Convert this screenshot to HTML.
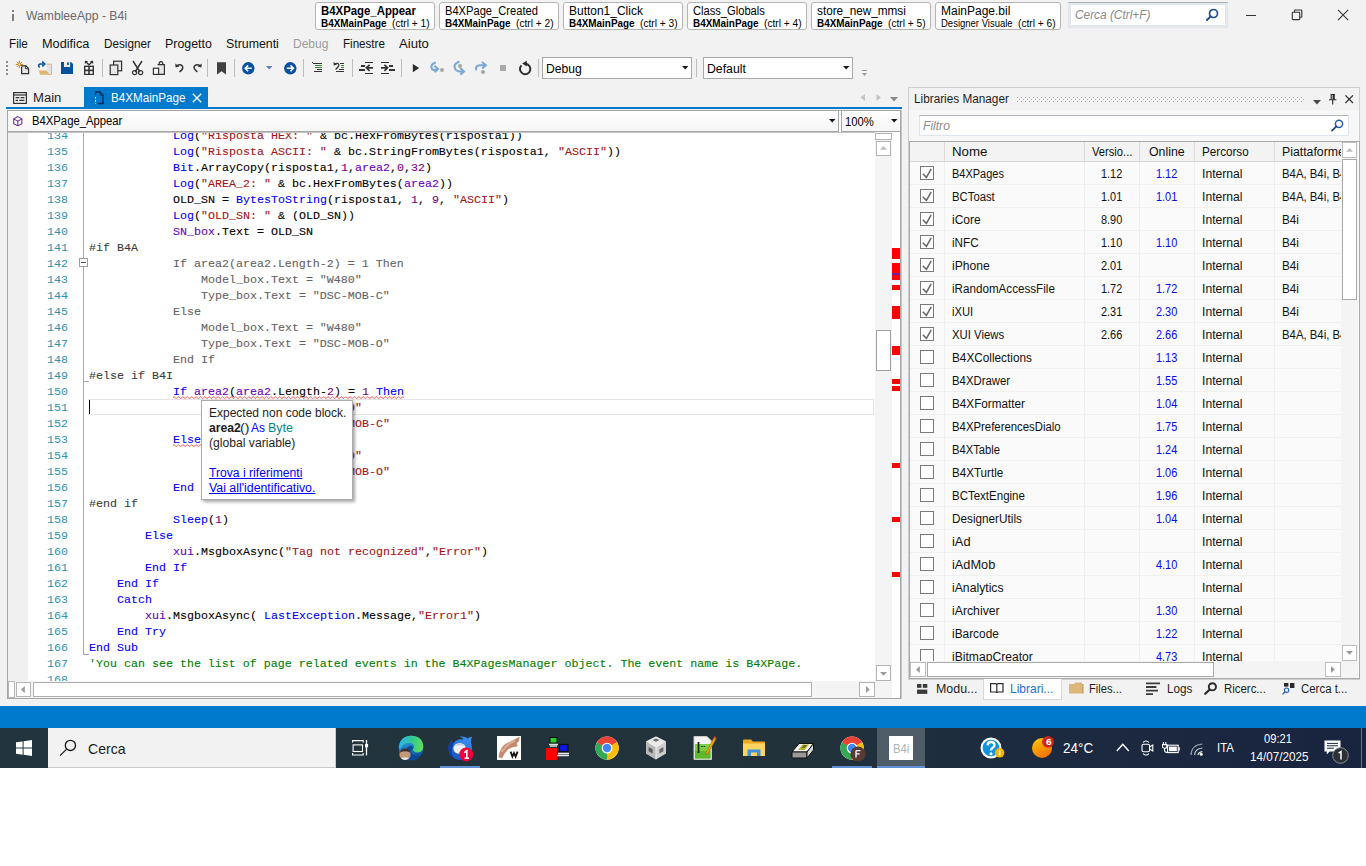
<!DOCTYPE html>
<html lang="it"><head><meta charset="utf-8"><title>B4i</title>
<style>
html,body{margin:0;padding:0;}
body{width:1366px;height:866px;position:relative;overflow:hidden;background:#fff;font-family:"Liberation Sans", sans-serif;font-size:12px;}
div,span.t,svg{position:absolute;}
span.t{white-space:pre;transform-origin:0 0;}
span.m{font-family:"Liberation Mono", monospace;}
span.c{font-size:11.67px;line-height:16px;letter-spacing:-0.003px;}
span.k{-webkit-text-stroke:0.1px;}
</style></head>
<body>
<div style="left:0px;top:0px;width:1366px;height:706px;background:#f2f2f2;"></div>
<div style="left:12px;top:10px;width:2px;height:2px;background:#7f7f7f;"></div>
<div style="left:12px;top:14px;width:2px;height:7px;background:#7f7f7f;"></div>
<span class="t" style="top:9.00px;font-size:12.5px;line-height:14px;color:#6a6a6a;left:25.82px;transform:scaleX(0.9723);">WambleeApp - B4i</span>
<div style="left:315px;top:2px;width:120px;height:28px;background:#fff;border:1px solid #b4b4b4;box-sizing:border-box;border-radius:3px;"></div>
<span class="t" style="top:4.00px;font-size:12.5px;line-height:14px;color:#000;font-weight:700;left:321.33px;transform:scaleX(0.9103);">B4XPage_Appear</span>
<span class="t" style="top:18.00px;font-size:10px;line-height:11px;color:#000;font-weight:700;left:321.35px;transform:scaleX(0.9918);">B4XMainPage</span>
<span class="t" style="top:18.00px;font-size:10px;line-height:11px;color:#000;left:392.15px;transform:scaleX(1.0175);">(ctrl + 1)</span>
<div style="left:439px;top:2px;width:120px;height:28px;background:#fff;border:1px solid #b4b4b4;box-sizing:border-box;border-radius:3px;"></div>
<span class="t" style="top:4.00px;font-size:12.5px;line-height:14px;color:#000;left:445.33px;transform:scaleX(0.8909);">B4XPage_Created</span>
<span class="t" style="top:18.00px;font-size:10px;line-height:11px;color:#000;font-weight:700;left:445.35px;transform:scaleX(0.9918);">B4XMainPage</span>
<span class="t" style="top:18.00px;font-size:10px;line-height:11px;color:#000;left:516.15px;transform:scaleX(1.0175);">(ctrl + 2)</span>
<div style="left:563px;top:2px;width:120px;height:28px;background:#fff;border:1px solid #b4b4b4;box-sizing:border-box;border-radius:3px;"></div>
<span class="t" style="top:4.00px;font-size:12.5px;line-height:14px;color:#000;left:569.32px;transform:scaleX(0.9579);">Button1_Click</span>
<span class="t" style="top:18.00px;font-size:10px;line-height:11px;color:#000;font-weight:700;left:569.35px;transform:scaleX(0.9918);">B4XMainPage</span>
<span class="t" style="top:18.00px;font-size:10px;line-height:11px;color:#000;left:640.15px;transform:scaleX(1.0175);">(ctrl + 3)</span>
<div style="left:687px;top:2px;width:120px;height:28px;background:#fff;border:1px solid #b4b4b4;box-sizing:border-box;border-radius:3px;"></div>
<span class="t" style="top:4.00px;font-size:12.5px;line-height:14px;color:#000;left:693.33px;transform:scaleX(0.8918);">Class_Globals</span>
<span class="t" style="top:18.00px;font-size:10px;line-height:11px;color:#000;font-weight:700;left:693.35px;transform:scaleX(0.9918);">B4XMainPage</span>
<span class="t" style="top:18.00px;font-size:10px;line-height:11px;color:#000;left:764.15px;transform:scaleX(1.0175);">(ctrl + 4)</span>
<div style="left:811px;top:2px;width:120px;height:28px;background:#fff;border:1px solid #b4b4b4;box-sizing:border-box;border-radius:3px;"></div>
<span class="t" style="top:4.00px;font-size:12.5px;line-height:14px;color:#000;left:817.32px;transform:scaleX(0.9406);">store_new_mmsi</span>
<span class="t" style="top:18.00px;font-size:10px;line-height:11px;color:#000;font-weight:700;left:817.35px;transform:scaleX(0.9918);">B4XMainPage</span>
<span class="t" style="top:18.00px;font-size:10px;line-height:11px;color:#000;left:888.15px;transform:scaleX(1.0175);">(ctrl + 5)</span>
<div style="left:935px;top:2px;width:126px;height:28px;background:#fff;border:1px solid #b4b4b4;box-sizing:border-box;border-radius:3px;"></div>
<span class="t" style="top:4.00px;font-size:12.5px;line-height:14px;color:#000;left:941.32px;transform:scaleX(0.9600);">MainPage.bil</span>
<span class="t" style="top:18.00px;font-size:10px;line-height:11px;color:#000;left:941.36px;transform:scaleX(0.9493);">Designer Visuale</span>
<span class="t" style="top:18.00px;font-size:10px;line-height:11px;color:#000;left:1018.15px;transform:scaleX(1.0175);">(ctrl + 6)</span>
<div style="left:1068px;top:2px;width:160px;height:26px;background:#fff;border:3px solid #e2e6ed;box-sizing:border-box;"></div>
<div style="left:1068px;top:2px;width:160px;height:1px;background:#adb0b6;"></div>
<span class="t" style="top:8.00px;font-size:12.5px;line-height:14px;color:#8a8a8a;font-style:italic;left:1074.82px;transform:scaleX(0.9477);">Cerca (Ctrl+F)</span>
<svg style="left:1204px;top:7px" width="16" height="16" viewBox="0 0 16 16"><circle cx="9.5" cy="6.5" r="4" fill="none" stroke="#1f4e9c" stroke-width="1.7"/><path d="M6.6 9.4 L3 13" stroke="#1f4e9c" stroke-width="2" stroke-linecap="round"/></svg>
<div style="left:1246px;top:15px;width:10px;height:1px;background:#333;"></div>
<svg style="left:1291px;top:9px" width="12" height="12" viewBox="0 0 12 12"><path d="M3.5 3 V1.4 Q3.5 1 4 1 H10.3 Q10.8 1 10.8 1.5 V7.8 Q10.8 8.3 10.3 8.3 H9" fill="none" stroke="#333" stroke-width="1.1"/><rect x="1.3" y="3.3" width="7.4" height="7.3" rx="0.6" fill="none" stroke="#333" stroke-width="1.1"/></svg>
<svg style="left:1337px;top:9px" width="12" height="12" viewBox="0 0 12 12"><path d="M1 0.9 L11.2 11.1 M11.2 0.9 L1 11.1" stroke="#333" stroke-width="1.1"/></svg>
<span class="t" style="top:37.00px;font-size:12.5px;line-height:14px;color:#111;left:9.32px;transform:scaleX(0.9364);">File</span>
<span class="t" style="top:37.00px;font-size:12.5px;line-height:14px;color:#111;left:42.31px;transform:scaleX(1.0178);">Modifica</span>
<span class="t" style="top:37.00px;font-size:12.5px;line-height:14px;color:#111;left:104.32px;transform:scaleX(0.9369);">Designer</span>
<span class="t" style="top:37.00px;font-size:12.5px;line-height:14px;color:#111;left:165.31px;transform:scaleX(0.9917);">Progetto</span>
<span class="t" style="top:37.00px;font-size:12.5px;line-height:14px;color:#111;left:226.31px;transform:scaleX(0.9883);">Strumenti</span>
<span class="t" style="top:37.00px;font-size:12.5px;line-height:14px;color:#9a9a9a;left:293.32px;transform:scaleX(0.9601);">Debug</span>
<span class="t" style="top:37.00px;font-size:12.5px;line-height:14px;color:#111;left:343.33px;transform:scaleX(0.9273);">Finestre</span>
<span class="t" style="top:37.00px;font-size:12.5px;line-height:14px;color:#111;left:399.30px;transform:scaleX(1.0482);">Aiuto</span>
<div style="left:6px;top:61px;width:2px;height:2px;background:#8c8c8c;"></div>
<div style="left:6px;top:65px;width:2px;height:2px;background:#8c8c8c;"></div>
<div style="left:6px;top:69px;width:2px;height:2px;background:#8c8c8c;"></div>
<div style="left:6px;top:73px;width:2px;height:2px;background:#8c8c8c;"></div>
<svg style="left:15px;top:60px" width="16" height="16" viewBox="0 0 16 16"><path d="M6.6 5.8 H11 L13.6 8.4 V13.6 H6.6 Z" fill="#e8e8e8" stroke="#333333" stroke-width="1.2"/><path d="M10.6 5.8 V8.8 H13.6" fill="none" stroke="#333333" stroke-width="1"/><path d="M4.4 0.8 V8 M0.8 4.4 H8 M1.9 1.9 L6.9 6.9 M6.9 1.9 L1.9 6.9" stroke="#d47800" stroke-width="1"/><circle cx="4.4" cy="4.4" r="1" fill="#fff"/></svg>
<svg style="left:37px;top:60px" width="16" height="16" viewBox="0 0 16 16"><path d="M9.5 4.2 H14.5 V14.4 H11" fill="#e4e4e4" stroke="#dcb77c" stroke-width="1"/><path d="M2 10.4 H9.6 L12.6 14.8 H3 Z" fill="#deb673"/><path d="M2.6 7.6 Q0.4 5 3.2 4 H6.4" fill="none" stroke="#0a4fa3" stroke-width="1.6"/><path d="M5.2 1.6 L7.8 4 L5.2 6.4" fill="none" stroke="#0a4fa3" stroke-width="1.6"/></svg>
<svg style="left:61px;top:62px" width="12" height="12" viewBox="0 0 12 12"><path d="M0 0 H10 L12 2 V12 H0 Z" fill="#00539c"/><rect x="3" y="0" width="6.2" height="5" fill="#f0ece8"/><rect x="6.1" y="0.4" width="1.7" height="2.6" fill="#00539c"/></svg>
<svg style="left:83px;top:60px" width="12" height="16" viewBox="0 0 12 16"><rect x="1" y="5.6" width="10" height="9.4" fill="#333333"/><rect x="2.4" y="7" width="2.8" height="2.6" fill="#f4f4f4"/><rect x="6.8" y="7" width="2.8" height="2.6" fill="#f4f4f4"/><rect x="2.4" y="11.2" width="2.8" height="2.6" fill="#f4f4f4"/><rect x="6.8" y="11.2" width="2.8" height="2.6" fill="#f4f4f4"/><path d="M2.6 1.6 L6 4.8 L9.4 1.6 M2.2 3.4 L2.6 1.4 L4.6 1.6 M9.8 3.4 L9.4 1.4 L7.4 1.6" fill="none" stroke="#333333" stroke-width="1.3"/></svg>
<div style="left:102px;top:59px;width:1px;height:18px;background:#bdbdbd;"></div>
<svg style="left:109px;top:60px" width="14" height="16" viewBox="0 0 14 16"><rect x="4.6" y="1.2" width="8" height="9.6" fill="#e6e6e6" stroke="#333333" stroke-width="1.2"/><rect x="1.2" y="5" width="7.6" height="9.6" fill="#e6e6e6" stroke="#333333" stroke-width="1.2"/></svg>
<svg style="left:131px;top:60px" width="14" height="16" viewBox="0 0 14 16"><path d="M2 1 L9 12 M11 1 L4 12" stroke="#333333" stroke-width="1.4"/><circle cx="3.6" cy="12.6" r="2.1" fill="none" stroke="#333333" stroke-width="1.2"/><circle cx="9.6" cy="12.6" r="2.1" fill="none" stroke="#333333" stroke-width="1.2"/></svg>
<svg style="left:152px;top:60px" width="14" height="16" viewBox="0 0 14 16"><path d="M5.6 4.6 H12.4 V14.4 H7" fill="#e6e6e6" stroke="#333333" stroke-width="1.2"/><path d="M7 4.4 Q7.2 1.6 9 1.6 Q10.8 1.6 11 4.4" fill="none" stroke="#333333" stroke-width="1.2"/><rect x="1.4" y="8.2" width="5.2" height="6.2" fill="#f6f6f6" stroke="#333333" stroke-width="1.2"/></svg>
<svg style="left:174px;top:63px" width="11" height="10" viewBox="0 0 11 10"><path d="M2.6 2.8 Q7.2 0.2 8.6 3.6 Q9.4 6.4 5.4 8.8" fill="none" stroke="#333333" stroke-width="1.5"/><path d="M1.2 0.6 L1.6 4.6 L5.4 3.6 Z" fill="#333333"/></svg>
<svg style="left:192px;top:63px" width="11" height="10" viewBox="0 0 11 10"><path d="M8.6 2.8 Q4 0.2 2.2 3.4 Q1.4 5.6 5.4 8.8" fill="none" stroke="#333333" stroke-width="1.5"/><path d="M9.8 0.6 L9.4 4.6 L5.6 3.6 Z" fill="#333333"/></svg>
<div style="left:207px;top:59px;width:1px;height:18px;background:#bdbdbd;"></div>
<svg style="left:216px;top:62px" width="12" height="13" viewBox="0 0 12 13"><path d="M1 0.3 H10 V12.4 L5.5 9.2 L1 12.4 Z" fill="#404040"/></svg>
<div style="left:234px;top:59px;width:1px;height:18px;background:#bdbdbd;"></div>
<svg style="left:241.5px;top:61.5px" width="13" height="13" viewBox="0 0 13 13"><circle cx="6.3" cy="6.3" r="6.2" fill="#0a4fa3"/><path d="M9.8 6.3 H3.4 M6.1 3.4 L3.2 6.3 L6.1 9.2" fill="none" stroke="#fff" stroke-width="1.6"/></svg>
<svg style="left:266px;top:66px" width="7" height="4" viewBox="0 0 7 4"><path d="M0 0 H6.4 L3.2 3.6 Z" fill="#5a7fc4"/></svg>
<svg style="left:283.5px;top:61.5px" width="13" height="13" viewBox="0 0 13 13"><circle cx="6.3" cy="6.3" r="6.2" fill="#0a4fa3"/><path d="M2.8 6.3 H9.2 M6.5 3.4 L9.4 6.3 L6.5 9.2" fill="none" stroke="#fff" stroke-width="1.6"/></svg>
<div style="left:303px;top:59px;width:1px;height:18px;background:#bdbdbd;"></div>
<div style="left:312px;top:62px;width:1px;height:1px;background:#333333;"></div>
<div style="left:313px;top:63px;width:9px;height:1px;background:#333333;"></div>
<div style="left:315px;top:65px;width:7px;height:1px;background:#2e8b2e;"></div>
<div style="left:315px;top:67px;width:7px;height:1px;background:#2e8b2e;"></div>
<div style="left:317px;top:69px;width:5px;height:1px;background:#333333;"></div>
<div style="left:314px;top:71px;width:8px;height:1px;background:#333333;"></div>
<svg style="left:333px;top:61px" width="8" height="10" viewBox="0 0 8 10"><path d="M1.4 3.6 Q5.2 1 5.8 3.8 Q6 5.6 2.6 8.4" fill="none" stroke="#333333" stroke-width="1.3"/><path d="M0.4 1 L0.8 4.6 L4 3.6 Z" fill="#333333"/></svg>
<div style="left:340px;top:63px;width:4px;height:1px;background:#333333;"></div>
<div style="left:341px;top:65px;width:3px;height:1px;background:#2e8b2e;"></div>
<div style="left:341px;top:67px;width:3px;height:1px;background:#2e8b2e;"></div>
<div style="left:339px;top:69px;width:5px;height:1px;background:#333333;"></div>
<div style="left:336px;top:71px;width:8px;height:1px;background:#333333;"></div>
<div style="left:352px;top:59px;width:1px;height:18px;background:#bdbdbd;"></div>
<div style="left:365px;top:62px;width:8px;height:1px;background:#333333;"></div>
<div style="left:365px;top:73px;width:8px;height:1px;background:#333333;"></div>
<div style="left:361px;top:65px;width:4px;height:2px;background:#333333;"></div>
<div style="left:359px;top:69px;width:6px;height:2px;background:#333333;"></div>
<svg style="left:365px;top:64px" width="9" height="8" viewBox="0 0 9 8"><path d="M8 3.8 H2 M4.6 0.8 L1.4 3.8 L4.6 6.8" fill="none" stroke="#333333" stroke-width="1.7"/></svg>
<div style="left:381px;top:62px;width:8px;height:1px;background:#333333;"></div>
<div style="left:381px;top:73px;width:8px;height:1px;background:#333333;"></div>
<div style="left:389px;top:65px;width:4px;height:2px;background:#333333;"></div>
<div style="left:389px;top:69px;width:6px;height:2px;background:#333333;"></div>
<svg style="left:380px;top:64px" width="9" height="8" viewBox="0 0 9 8"><path d="M1 3.8 H7 M4.4 0.8 L7.6 3.8 L4.4 6.8" fill="none" stroke="#333333" stroke-width="1.7"/></svg>
<div style="left:401px;top:59px;width:1px;height:18px;background:#bdbdbd;"></div>
<svg style="left:412px;top:64px" width="8" height="9" viewBox="0 0 8 9"><path d="M0.8 0 L7.2 4.1 L0.8 8.2 Z" fill="#2b2b2b"/></svg>
<svg style="left:429px;top:61px" width="16" height="14" viewBox="0 0 16 14"><path d="M6.8 1.6 Q0.6 3.4 3 8 Q4.4 9.6 8.4 8.2" fill="none" stroke="#7ba9d6" stroke-width="2.1"/><path d="M5.4 4.8 L9 8 L5.6 11.2" fill="none" stroke="#7ba9d6" stroke-width="2.1"/><circle cx="13" cy="9" r="2" fill="#a6a6a6"/></svg>
<svg style="left:453px;top:60px" width="13" height="16" viewBox="0 0 13 16"><path d="M6.4 1.4 Q-0.6 4 2.6 9.6 Q5 12.4 10 11.4" fill="none" stroke="#7ba9d6" stroke-width="2.1"/><path d="M7.2 8 L11 11.4 L7.4 14.8" fill="none" stroke="#7ba9d6" stroke-width="2.1"/><circle cx="7" cy="6" r="2" fill="#a6a6a6"/></svg>
<svg style="left:474px;top:61px" width="14" height="14" viewBox="0 0 14 14"><path d="M2.4 9.4 Q0.8 4.6 6 4.2 H11" fill="none" stroke="#7ba9d6" stroke-width="2.1"/><path d="M8 1 L11.8 4.2 L8.2 7.6" fill="none" stroke="#7ba9d6" stroke-width="2.1"/><circle cx="9" cy="11" r="2" fill="#a6a6a6"/></svg>
<div style="left:500px;top:65px;width:6px;height:6px;background:#a9a9a9;"></div>
<svg style="left:518px;top:60px" width="14" height="16" viewBox="0 0 14 16"><path d="M3.4 5.4 A5.2 5.2 0 1 0 7.4 3.8" fill="none" stroke="#2b2b2b" stroke-width="2"/><path d="M8.8 0.8 V6.6 L4.2 3.6 Z" fill="#2b2b2b"/></svg>
<div style="left:538px;top:59px;width:1px;height:18px;background:#bdbdbd;"></div>
<div style="left:542px;top:57px;width:150px;height:22px;background:#fff;border:1px solid #a8a8a8;box-sizing:border-box;"></div>
<span class="t" style="top:62.30px;font-size:12.5px;line-height:14px;color:#000;left:546.32px;transform:scaleX(0.9737);">Debug</span>
<svg style="left:682px;top:66px" width="7" height="4" viewBox="0 0 7 4"><path d="M0 0 H6.4 L3.2 3.6 Z" fill="#1a1a1a"/></svg>
<div style="left:696px;top:59px;width:1px;height:18px;background:#bdbdbd;"></div>
<div style="left:703px;top:57px;width:150px;height:22px;background:#fff;border:1px solid #a8a8a8;box-sizing:border-box;"></div>
<span class="t" style="top:62.30px;font-size:12.5px;line-height:14px;color:#000;left:707.32px;transform:scaleX(0.9815);">Default</span>
<svg style="left:843px;top:66px" width="7" height="4" viewBox="0 0 7 4"><path d="M0 0 H6.4 L3.2 3.6 Z" fill="#1a1a1a"/></svg>
<svg style="left:862px;top:70px" width="6" height="7" viewBox="0 0 6 7"><path d="M0 0.5 H5" stroke="#9a9a9a" stroke-width="1"/><path d="M0 3 H5 L2.5 6 Z" fill="#9a9a9a"/></svg>
<svg style="left:13px;top:92px" width="14" height="13" viewBox="0 0 14 13"><rect x="0.6" y="0.6" width="12.8" height="10.8" fill="none" stroke="#333333" stroke-width="1.2"/><path d="M1 3 H13" stroke="#333333" stroke-width="1.2"/><path d="M2.6 5.6 H6.4 M7.6 5.6 H11.4 M2.6 8.4 H5 M6.2 8.4 H11.4" stroke="#333333" stroke-width="1.3"/></svg>
<span class="t" style="top:91.00px;font-size:12.5px;line-height:14px;color:#1e1e1e;left:32.80px;transform:scaleX(1.0473);">Main</span>
<div style="left:84px;top:87px;width:124px;height:21px;background:#007acc;"></div>
<svg style="left:92px;top:91px" width="12" height="14" viewBox="0 0 12 14"><path d="M3.5 4 V1 H8 L11 4 V12.5 H6" fill="none" stroke="#0c2a55" stroke-width="1.3"/><path d="M8 1 V4 H11" fill="none" stroke="#0c2a55" stroke-width="1"/><path d="M3.5 6 V12.5" stroke="#fff" stroke-width="1.1" stroke-dasharray="1.6 1.4"/><path d="M0 8.6 H2.6 M1.4 7.3 L0 8.6 L1.4 9.9" fill="none" stroke="#1d5fb5" stroke-width="1"/></svg>
<span class="t" style="top:91.00px;font-size:12.5px;line-height:14px;color:#fff;left:110.83px;transform:scaleX(0.9306);">B4XMainPage</span>
<svg style="left:192px;top:93px" width="10" height="10" viewBox="0 0 10 10"><path d="M0.8 0.8 L9.2 9.2 M9.2 0.8 L0.8 9.2" stroke="#fff" stroke-width="1.3"/></svg>
<div style="left:6px;top:107px;width:896px;height:2px;background:#007acc;"></div>
<svg style="left:860px;top:94px" width="6" height="8" viewBox="0 0 6 8"><path d="M5 0 V7 L0.5 3.5 Z" fill="#c4c4c4"/></svg>
<svg style="left:876px;top:94px" width="6" height="8" viewBox="0 0 6 8"><path d="M0.5 0 V7 L5 3.5 Z" fill="#c4c4c4"/></svg>
<svg style="left:890px;top:97px" width="9" height="5" viewBox="0 0 9 5"><path d="M0 0 H8 L4 4.5 Z" fill="#8a8a8a"/></svg>
<div style="left:7px;top:110px;width:894px;height:589px;background:#fff;border:1px solid #a6a6a6;box-sizing:border-box;"></div>
<div style="left:7px;top:110px;width:832px;height:22px;background:linear-gradient(#ffffff,#f6f6f6);border:1px solid #a6a6a6;box-sizing:border-box;"></div>
<div style="left:841px;top:110px;width:60px;height:22px;background:linear-gradient(#ffffff,#f6f6f6);border:1px solid #a6a6a6;box-sizing:border-box;"></div>
<svg style="left:13.4px;top:115.8px" width="9.6" height="10.5" viewBox="0 0 11 12"><path d="M5.5 0.7 L10.2 3.3 V8.7 L5.5 11.3 L0.8 8.7 V3.3 Z M0.8 3.3 L5.5 6 L10.2 3.3 M5.5 6 V11.3" fill="none" stroke="#6b2fa0" stroke-width="1.2"/></svg>
<span class="t" style="top:114.00px;font-size:12.5px;line-height:14px;color:#000;left:32.33px;transform:scaleX(0.9029);">B4XPage_Appear</span>
<svg style="left:829px;top:119px" width="7" height="4" viewBox="0 0 7 4"><path d="M0 0 H6.4 L3.2 3.4 Z" fill="#111"/></svg>
<span class="t" style="top:115.00px;font-size:12.5px;line-height:14px;color:#000;left:845.33px;transform:scaleX(0.9028);">100%</span>
<svg style="left:891px;top:119px" width="7" height="4" viewBox="0 0 7 4"><path d="M0 0 H6.4 L3.2 3.4 Z" fill="#111"/></svg>
<div style="left:8px;top:132px;width:867px;height:549px;overflow:hidden;background:#fff"><div style="left:0px;top:0px;width:20px;height:549px;background:#f0f0f0;"></div><div style="left:80px;top:267px;width:786px;height:16px;border:1px solid #e4e4e4;box-sizing:border-box;border-left:none;"></div><div style="left:81px;top:268px;width:1px;height:14px;background:#000;"></div><div style="left:75px;top:0px;width:1px;height:523px;background:#a9a9a9;"></div><div style="left:75px;top:522px;width:6px;height:1px;background:#a9a9a9;"></div><div style="left:75px;top:249px;width:6px;height:1px;background:#a9a9a9;"></div><div style="left:71px;top:126px;width:9px;height:9px;background:#fff;border:1px solid #a0a0a0;box-sizing:border-box;"></div><div style="left:73px;top:130px;width:5px;height:1px;background:#555;"></div><span class="t m c" style="left:39.00px;top:-4.00px;color:#2b91af">134</span><span class="t m c k" style="left:165.00px;top:-4.00px;color:#0000ff">Log</span><span class="t m c k" style="left:186.00px;top:-4.00px;color:#000000">(</span><span class="t m c k" style="left:193.00px;top:-4.00px;color:#a31515">"Risposta HEX: "</span><span class="t m c k" style="left:305.00px;top:-4.00px;color:#000000"> &amp; bc.HexFromBytes(risposta1))</span><span class="t m c" style="left:39.00px;top:12.00px;color:#2b91af">135</span><span class="t m c k" style="left:165.00px;top:12.00px;color:#0000ff">Log</span><span class="t m c k" style="left:186.00px;top:12.00px;color:#000000">(</span><span class="t m c k" style="left:193.00px;top:12.00px;color:#a31515">"Risposta ASCII: "</span><span class="t m c k" style="left:319.00px;top:12.00px;color:#000000"> &amp; bc.StringFromBytes(risposta1, </span><span class="t m c k" style="left:550.00px;top:12.00px;color:#a31515">"ASCII"</span><span class="t m c k" style="left:599.00px;top:12.00px;color:#000000">))</span><span class="t m c" style="left:39.00px;top:28.00px;color:#2b91af">136</span><span class="t m c k" style="left:165.00px;top:28.00px;color:#0000ff">Bit</span><span class="t m c k" style="left:186.00px;top:28.00px;color:#000000">.ArrayCopy(risposta1,</span><span class="t m c k" style="left:333.00px;top:28.00px;color:#800080">1</span><span class="t m c k" style="left:340.00px;top:28.00px;color:#000000">,</span><span class="t m c k" style="left:347.00px;top:28.00px;color:#6800c4">area2</span><span class="t m c k" style="left:382.00px;top:28.00px;color:#000000">,</span><span class="t m c k" style="left:389.00px;top:28.00px;color:#800080">0</span><span class="t m c k" style="left:396.00px;top:28.00px;color:#000000">,</span><span class="t m c k" style="left:403.00px;top:28.00px;color:#800080">32</span><span class="t m c k" style="left:417.00px;top:28.00px;color:#000000">)</span><span class="t m c" style="left:39.00px;top:44.00px;color:#2b91af">137</span><span class="t m c k" style="left:165.00px;top:44.00px;color:#0000ff">Log</span><span class="t m c k" style="left:186.00px;top:44.00px;color:#000000">(</span><span class="t m c k" style="left:193.00px;top:44.00px;color:#a31515">"AREA_2: "</span><span class="t m c k" style="left:263.00px;top:44.00px;color:#000000"> &amp; bc.HexFromBytes(</span><span class="t m c k" style="left:396.00px;top:44.00px;color:#6800c4">area2</span><span class="t m c k" style="left:431.00px;top:44.00px;color:#000000">))</span><span class="t m c" style="left:39.00px;top:60.00px;color:#2b91af">138</span><span class="t m c k" style="left:165.00px;top:60.00px;color:#000000">OLD_SN = </span><span class="t m c k" style="left:228.00px;top:60.00px;color:#0000ff">BytesToString</span><span class="t m c k" style="left:319.00px;top:60.00px;color:#000000">(risposta1, </span><span class="t m c k" style="left:403.00px;top:60.00px;color:#800080">1</span><span class="t m c k" style="left:410.00px;top:60.00px;color:#000000">, </span><span class="t m c k" style="left:424.00px;top:60.00px;color:#800080">9</span><span class="t m c k" style="left:431.00px;top:60.00px;color:#000000">, </span><span class="t m c k" style="left:445.00px;top:60.00px;color:#a31515">"ASCII"</span><span class="t m c k" style="left:494.00px;top:60.00px;color:#000000">)</span><span class="t m c" style="left:39.00px;top:76.00px;color:#2b91af">139</span><span class="t m c k" style="left:165.00px;top:76.00px;color:#0000ff">Log</span><span class="t m c k" style="left:186.00px;top:76.00px;color:#000000">(</span><span class="t m c k" style="left:193.00px;top:76.00px;color:#a31515">"OLD_SN: "</span><span class="t m c k" style="left:263.00px;top:76.00px;color:#000000"> &amp; (OLD_SN))</span><span class="t m c" style="left:39.00px;top:92.00px;color:#2b91af">140</span><span class="t m c k" style="left:165.00px;top:92.00px;color:#6800c4">SN_box</span><span class="t m c k" style="left:207.00px;top:92.00px;color:#000000">.Text = OLD_SN</span><span class="t m c" style="left:39.00px;top:108.00px;color:#2b91af">141</span><span class="t m c k" style="left:81.00px;top:108.00px;color:#3c3c3c">#if B4A</span><span class="t m c" style="left:39.00px;top:124.00px;color:#2b91af">142</span><span class="t m c k" style="left:165.00px;top:124.00px;color:#646464">If area2(area2.Length-2) = 1 Then</span><span class="t m c" style="left:39.00px;top:140.00px;color:#2b91af">143</span><span class="t m c k" style="left:193.00px;top:140.00px;color:#646464">Model_box.Text = "W480"</span><span class="t m c" style="left:39.00px;top:156.00px;color:#2b91af">144</span><span class="t m c k" style="left:193.00px;top:156.00px;color:#646464">Type_box.Text = "DSC-MOB-C"</span><span class="t m c" style="left:39.00px;top:172.00px;color:#2b91af">145</span><span class="t m c k" style="left:165.00px;top:172.00px;color:#646464">Else</span><span class="t m c" style="left:39.00px;top:188.00px;color:#2b91af">146</span><span class="t m c k" style="left:193.00px;top:188.00px;color:#646464">Model_box.Text = "W480"</span><span class="t m c" style="left:39.00px;top:204.00px;color:#2b91af">147</span><span class="t m c k" style="left:193.00px;top:204.00px;color:#646464">Type_box.Text = "DSC-MOB-O"</span><span class="t m c" style="left:39.00px;top:220.00px;color:#2b91af">148</span><span class="t m c k" style="left:165.00px;top:220.00px;color:#646464">End If</span><span class="t m c" style="left:39.00px;top:236.00px;color:#2b91af">149</span><span class="t m c k" style="left:81.00px;top:236.00px;color:#3c3c3c">#else if B4I</span><span class="t m c" style="left:39.00px;top:252.00px;color:#2b91af">150</span><span class="t m c k" style="left:165.00px;top:252.00px;color:#0000ff">If</span><span class="t m c k" style="left:179.00px;top:252.00px;color:#000000"> </span><span class="t m c k" style="left:186.00px;top:252.00px;color:#6800c4">area2</span><span class="t m c k" style="left:221.00px;top:252.00px;color:#000000">(</span><span class="t m c k" style="left:228.00px;top:252.00px;color:#6800c4">area2</span><span class="t m c k" style="left:263.00px;top:252.00px;color:#000000">.Length-</span><span class="t m c k" style="left:319.00px;top:252.00px;color:#800080">2</span><span class="t m c k" style="left:326.00px;top:252.00px;color:#000000">) = </span><span class="t m c k" style="left:354.00px;top:252.00px;color:#800080">1</span><span class="t m c k" style="left:361.00px;top:252.00px;color:#000000"> </span><span class="t m c k" style="left:368.00px;top:252.00px;color:#0000ff">Then</span><span class="t m c" style="left:39.00px;top:268.00px;color:#2b91af">151</span><span class="t m c k" style="left:193.00px;top:268.00px;color:#6800c4">Model_box</span><span class="t m c k" style="left:256.00px;top:268.00px;color:#000000">.Text = </span><span class="t m c k" style="left:312.00px;top:268.00px;color:#a31515">"W480"</span><span class="t m c" style="left:39.00px;top:284.00px;color:#2b91af">152</span><span class="t m c k" style="left:193.00px;top:284.00px;color:#6800c4">Type_box</span><span class="t m c k" style="left:249.00px;top:284.00px;color:#000000">.Text = </span><span class="t m c k" style="left:305.00px;top:284.00px;color:#a31515">"DSC-MOB-C"</span><span class="t m c" style="left:39.00px;top:300.00px;color:#2b91af">153</span><span class="t m c k" style="left:165.00px;top:300.00px;color:#0000ff">Else</span><span class="t m c" style="left:39.00px;top:316.00px;color:#2b91af">154</span><span class="t m c k" style="left:193.00px;top:316.00px;color:#6800c4">Model_box</span><span class="t m c k" style="left:256.00px;top:316.00px;color:#000000">.Text = </span><span class="t m c k" style="left:312.00px;top:316.00px;color:#a31515">"W480"</span><span class="t m c" style="left:39.00px;top:332.00px;color:#2b91af">155</span><span class="t m c k" style="left:193.00px;top:332.00px;color:#6800c4">Type_box</span><span class="t m c k" style="left:249.00px;top:332.00px;color:#000000">.Text = </span><span class="t m c k" style="left:305.00px;top:332.00px;color:#a31515">"DSC-MOB-O"</span><span class="t m c" style="left:39.00px;top:348.00px;color:#2b91af">156</span><span class="t m c k" style="left:165.00px;top:348.00px;color:#0000ff">End If</span><span class="t m c" style="left:39.00px;top:364.00px;color:#2b91af">157</span><span class="t m c k" style="left:81.00px;top:364.00px;color:#3c3c3c">#end if</span><span class="t m c" style="left:39.00px;top:380.00px;color:#2b91af">158</span><span class="t m c k" style="left:165.00px;top:380.00px;color:#0000ff">Sleep</span><span class="t m c k" style="left:200.00px;top:380.00px;color:#000000">(</span><span class="t m c k" style="left:207.00px;top:380.00px;color:#800080">1</span><span class="t m c k" style="left:214.00px;top:380.00px;color:#000000">)</span><span class="t m c" style="left:39.00px;top:396.00px;color:#2b91af">159</span><span class="t m c k" style="left:137.00px;top:396.00px;color:#0000ff">Else</span><span class="t m c" style="left:39.00px;top:412.00px;color:#2b91af">160</span><span class="t m c k" style="left:165.00px;top:412.00px;color:#6800c4">xui</span><span class="t m c k" style="left:186.00px;top:412.00px;color:#000000">.MsgboxAsync(</span><span class="t m c k" style="left:277.00px;top:412.00px;color:#a31515">"Tag not recognized"</span><span class="t m c k" style="left:417.00px;top:412.00px;color:#000000">,</span><span class="t m c k" style="left:424.00px;top:412.00px;color:#a31515">"Error"</span><span class="t m c k" style="left:473.00px;top:412.00px;color:#000000">)</span><span class="t m c" style="left:39.00px;top:428.00px;color:#2b91af">161</span><span class="t m c k" style="left:137.00px;top:428.00px;color:#0000ff">End If</span><span class="t m c" style="left:39.00px;top:444.00px;color:#2b91af">162</span><span class="t m c k" style="left:109.00px;top:444.00px;color:#0000ff">End If</span><span class="t m c" style="left:39.00px;top:460.00px;color:#2b91af">163</span><span class="t m c k" style="left:109.00px;top:460.00px;color:#0000ff">Catch</span><span class="t m c" style="left:39.00px;top:476.00px;color:#2b91af">164</span><span class="t m c k" style="left:137.00px;top:476.00px;color:#6800c4">xui</span><span class="t m c k" style="left:158.00px;top:476.00px;color:#000000">.MsgboxAsync( </span><span class="t m c k" style="left:256.00px;top:476.00px;color:#0000ff">LastException</span><span class="t m c k" style="left:347.00px;top:476.00px;color:#000000">.Message,</span><span class="t m c k" style="left:410.00px;top:476.00px;color:#a31515">"Error1"</span><span class="t m c k" style="left:466.00px;top:476.00px;color:#000000">)</span><span class="t m c" style="left:39.00px;top:492.00px;color:#2b91af">165</span><span class="t m c k" style="left:109.00px;top:492.00px;color:#0000ff">End Try</span><span class="t m c" style="left:39.00px;top:508.00px;color:#2b91af">166</span><span class="t m c k" style="left:81.00px;top:508.00px;color:#0000ff">End Sub</span><span class="t m c" style="left:39.00px;top:524.00px;color:#2b91af">167</span><span class="t m c k" style="left:81.00px;top:524.00px;color:#008000">'You can see the list of page related events in the B4XPagesManager object. The event name is B4XPage.</span><span class="t m c" style="left:39.00px;top:540.00px;color:#2b91af">168</span><svg style="left:165px;top:263.6px" width="231" height="4" viewBox="0 0 231 4"><path d="M0 1.6 q1.1 -1.8 2.2 0 t2.2 0 t2.2 0 t2.2 0 t2.2 0 t2.2 0 t2.2 0 t2.2 0 t2.2 0 t2.2 0 t2.2 0 t2.2 0 t2.2 0 t2.2 0 t2.2 0 t2.2 0 t2.2 0 t2.2 0 t2.2 0 t2.2 0 t2.2 0 t2.2 0 t2.2 0 t2.2 0 t2.2 0 t2.2 0 t2.2 0 t2.2 0 t2.2 0 t2.2 0 t2.2 0 t2.2 0 t2.2 0 t2.2 0 t2.2 0 t2.2 0 t2.2 0 t2.2 0 t2.2 0 t2.2 0 t2.2 0 t2.2 0 t2.2 0 t2.2 0 t2.2 0 t2.2 0 t2.2 0 t2.2 0 t2.2 0 t2.2 0 t2.2 0 t2.2 0 t2.2 0 t2.2 0 t2.2 0 t2.2 0 t2.2 0 t2.2 0 t2.2 0 t2.2 0 t2.2 0 t2.2 0 t2.2 0 t2.2 0 t2.2 0 t2.2 0 t2.2 0 t2.2 0 t2.2 0 t2.2 0 t2.2 0 t2.2 0 t2.2 0 t2.2 0 t2.2 0 t2.2 0 t2.2 0 t2.2 0 t2.2 0 t2.2 0 t2.2 0 t2.2 0 t2.2 0 t2.2 0 t2.2 0 t2.2 0 t2.2 0 t2.2 0 t2.2 0 t2.2 0 t2.2 0 t2.2 0 t2.2 0 t2.2 0 t2.2 0 t2.2 0 t2.2 0 t2.2 0 t2.2 0 t2.2 0 t2.2 0 t2.2 0 t2.2 0 t2.2 0 t2.2 0 t2.2 0" fill="none" stroke="#ff5252" stroke-width="1"/></svg><svg style="left:165px;top:311.6px" width="28" height="4" viewBox="0 0 28 4"><path d="M0 1.6 q1.1 -1.8 2.2 0 t2.2 0 t2.2 0 t2.2 0 t2.2 0 t2.2 0 t2.2 0 t2.2 0 t2.2 0 t2.2 0 t2.2 0 t2.2 0 t2.2 0 t2.2 0" fill="none" stroke="#ff5252" stroke-width="1"/></svg></div>
<div style="left:901px;top:110px;width:1px;height:589px;background:#c8c8c8;"></div>
<div style="left:8px;top:132px;width:892px;height:1px;background:#c4c4c4;"></div>
<div style="left:875px;top:132px;width:17px;height:549px;background:#f4f4f4;"></div>
<div style="left:875px;top:133px;width:17px;height:7px;background:#fff;border:1px solid #b5b5b5;box-sizing:border-box;"></div>
<div style="left:876px;top:141px;width:15px;height:15px;background:#fff;border:1px solid #b4b4b4;box-sizing:border-box;"></div>
<svg style="left:880px;top:146px" width="7" height="4" viewBox="0 0 7 4"><path d="M0 3.8 H7 L3.5 0 Z" fill="#bdbdbd"/></svg>
<div style="left:876px;top:330px;width:15px;height:41px;background:#fff;border:1px solid #a0a0a0;box-sizing:border-box;"></div>
<div style="left:876px;top:665px;width:15px;height:16px;background:#fff;border:1px solid #b4b4b4;box-sizing:border-box;"></div>
<svg style="left:880px;top:672px" width="7" height="4" viewBox="0 0 7 4"><path d="M0 0 H7 L3.5 3.8 Z" fill="#9a9a9a"/></svg>
<div style="left:892px;top:132px;width:8px;height:549px;background:#fff;"></div>
<div style="left:892px;top:248px;width:8px;height:11px;background:#ff0000;"></div>
<div style="left:892px;top:263px;width:8px;height:17px;background:#ff0000;"></div>
<div style="left:892px;top:285px;width:8px;height:5px;background:#ff0000;"></div>
<div style="left:892px;top:306px;width:8px;height:13px;background:#ff0000;"></div>
<div style="left:892px;top:346px;width:8px;height:9px;background:#ff0000;"></div>
<div style="left:892px;top:379px;width:8px;height:5px;background:#ff0000;"></div>
<div style="left:892px;top:386px;width:8px;height:5px;background:#ff0000;"></div>
<div style="left:892px;top:463px;width:8px;height:5px;background:#ff0000;"></div>
<div style="left:892px;top:517px;width:8px;height:5px;background:#ff0000;"></div>
<div style="left:892px;top:572px;width:8px;height:5px;background:#ff0000;"></div>
<div style="left:892px;top:273px;width:8px;height:2px;background:#6a1fa8;"></div>
<div style="left:8px;top:681px;width:892px;height:17px;background:#f4f4f4;"></div>
<div style="left:8px;top:681px;width:7px;height:17px;background:#fff;border:1px solid #b5b5b5;box-sizing:border-box;"></div>
<div style="left:16px;top:682px;width:15px;height:15px;background:#fff;border:1px solid #b4b4b4;box-sizing:border-box;"></div>
<svg style="left:21px;top:686px" width="4" height="7" viewBox="0 0 4 7"><path d="M3.8 0 V7 L0 3.5 Z" fill="#9a9a9a"/></svg>
<div style="left:33px;top:682px;width:779px;height:15px;background:#fff;border:1px solid #b0b0b0;box-sizing:border-box;"></div>
<div style="left:859px;top:682px;width:16px;height:15px;background:#fff;border:1px solid #b4b4b4;box-sizing:border-box;"></div>
<svg style="left:866px;top:686px" width="4" height="7" viewBox="0 0 4 7"><path d="M0 0 V7 L3.8 3.5 Z" fill="#9a9a9a"/></svg>
<div style="left:892px;top:681px;width:8px;height:17px;background:#fff;"></div>
<div style="left:201px;top:400px;width:152px;height:100px;background:#fff;border:1px solid #ababab;box-sizing:border-box;box-shadow:2px 2px 3px rgba(0,0,0,0.35);"></div>
<span class="t" style="top:406.00px;font-size:12.5px;line-height:14px;color:#1e1e1e;left:209.12px;transform:scaleX(0.9596);">Expected non code block.</span>
<span class="t" style="top:421.00px;font-size:12.5px;line-height:14px;color:#1e1e1e;font-weight:700;left:209.12px;transform:scaleX(0.9751);">area2</span>
<span class="t" style="top:421.00px;font-size:12.5px;line-height:14px;color:#1e1e1e;left:239.99px;transform:scaleX(1.1257);">()</span>
<span class="t" style="top:421.00px;font-size:12.5px;line-height:14px;color:#0000ff;left:251.22px;transform:scaleX(0.9507);">As</span>
<span class="t" style="top:421.00px;font-size:12.5px;line-height:14px;color:#008b8b;left:267.61px;transform:scaleX(0.9944);">Byte</span>
<span class="t" style="top:436.00px;font-size:12.5px;line-height:14px;color:#1e1e1e;left:209.12px;transform:scaleX(0.9712);">(global variable)</span>
<span class="t" style="top:466.00px;font-size:12.5px;line-height:14px;color:#0000ff;left:209.12px;transform:scaleX(0.9717);text-decoration:underline;text-underline-offset:1px;text-decoration-thickness:1px;">Trova i riferimenti</span>
<span class="t" style="top:481.00px;font-size:12.5px;line-height:14px;color:#0000ff;left:209.11px;transform:scaleX(0.9871);text-decoration:underline;text-underline-offset:1px;text-decoration-thickness:1px;">Vai all'identificativo.</span>
<div style="left:908px;top:87px;width:452px;height:593px;background:#f7f7f7;border:1px solid #cfcfcf;box-sizing:border-box;"></div>
<div style="left:909px;top:88px;width:450px;height:22px;background:#f2f2f2;"></div>
<span class="t" style="top:92.00px;font-size:12.5px;line-height:14px;color:#1e1e1e;left:914.32px;transform:scaleX(0.9417);">Libraries Manager</span>
<svg style="left:1017px;top:97px" width="288" height="6" viewBox="0 0 288 6"><defs><pattern id="gp" width="4" height="4" patternUnits="userSpaceOnUse"><rect x="0" y="0" width="1" height="1" fill="#a3a3a3"/><rect x="2" y="2" width="1" height="1" fill="#a3a3a3"/></pattern></defs><rect width="288" height="5" fill="url(#gp)"/></svg>
<svg style="left:1313px;top:99.5px" width="8" height="5" viewBox="0 0 8 5"><path d="M0 0 H8 L4 4.4 Z" fill="#4a4a4a"/></svg>
<svg style="left:1329px;top:94px" width="8" height="11" viewBox="0 0 8 11"><path d="M1.5 0.5 H6 M2.2 0.5 V5.5 M5.2 0.5 V5.5 M0 5.7 H7.4 M3.7 5.7 V10.5" fill="none" stroke="#2b2b2b" stroke-width="1.1"/><path d="M4.4 0.5 V5.5" stroke="#2b2b2b" stroke-width="1.6"/></svg>
<svg style="left:1345px;top:95px" width="9" height="9" viewBox="0 0 9 9"><path d="M0.4 0.4 L8 8 M8 0.4 L0.4 8" stroke="#2b2b2b" stroke-width="1.2"/></svg>
<div style="left:919px;top:115px;width:430px;height:21px;background:#fff;border:1px solid #dfe5ee;box-sizing:border-box;border-top-color:#aeb3bb;"></div>
<span class="t" style="top:119.00px;font-size:12.5px;line-height:14px;color:#8c8c8c;font-style:italic;left:923.32px;transform:scaleX(0.9674);">Filtro</span>
<svg style="left:1331px;top:119px" width="13" height="13" viewBox="0 0 13 13"><circle cx="8" cy="4.8" r="3.6" fill="none" stroke="#2a5db0" stroke-width="1.5"/><path d="M5.4 7.4 L1 11.6" stroke="#1d3f85" stroke-width="1.7" stroke-linecap="round"/></svg>
<div style="left:909px;top:141px;width:451px;height:538px;background:#fafafa;border:1px solid #a9a9a9;box-sizing:border-box;"></div>
<div style="left:910px;top:142px;width:432px;height:519px;overflow:hidden"><div style="left:0px;top:0px;width:432px;height:19px;background:#f3f3f3;"></div><div style="left:0px;top:19px;width:432px;height:1px;background:#d6d6d6;"></div><div style="left:34px;top:0px;width:1px;height:19px;background:#d9d9d9;"></div><div style="left:34px;top:20px;width:1px;height:500px;background:#efefef;"></div><div style="left:174px;top:0px;width:1px;height:19px;background:#d9d9d9;"></div><div style="left:174px;top:20px;width:1px;height:500px;background:#efefef;"></div><div style="left:229px;top:0px;width:1px;height:19px;background:#d9d9d9;"></div><div style="left:229px;top:20px;width:1px;height:500px;background:#efefef;"></div><div style="left:284px;top:0px;width:1px;height:19px;background:#d9d9d9;"></div><div style="left:284px;top:20px;width:1px;height:500px;background:#efefef;"></div><div style="left:364px;top:0px;width:1px;height:19px;background:#d9d9d9;"></div><div style="left:364px;top:20px;width:1px;height:500px;background:#efefef;"></div><div style="left:0px;top:42px;width:432px;height:1px;background:#f0f0f0;"></div><div style="left:0px;top:65px;width:432px;height:1px;background:#f0f0f0;"></div><div style="left:0px;top:88px;width:432px;height:1px;background:#f0f0f0;"></div><div style="left:0px;top:111px;width:432px;height:1px;background:#f0f0f0;"></div><div style="left:0px;top:134px;width:432px;height:1px;background:#f0f0f0;"></div><div style="left:0px;top:157px;width:432px;height:1px;background:#f0f0f0;"></div><div style="left:0px;top:180px;width:432px;height:1px;background:#f0f0f0;"></div><div style="left:0px;top:203px;width:432px;height:1px;background:#f0f0f0;"></div><div style="left:0px;top:226px;width:432px;height:1px;background:#f0f0f0;"></div><div style="left:0px;top:249px;width:432px;height:1px;background:#f0f0f0;"></div><div style="left:0px;top:272px;width:432px;height:1px;background:#f0f0f0;"></div><div style="left:0px;top:295px;width:432px;height:1px;background:#f0f0f0;"></div><div style="left:0px;top:318px;width:432px;height:1px;background:#f0f0f0;"></div><div style="left:0px;top:341px;width:432px;height:1px;background:#f0f0f0;"></div><div style="left:0px;top:364px;width:432px;height:1px;background:#f0f0f0;"></div><div style="left:0px;top:387px;width:432px;height:1px;background:#f0f0f0;"></div><div style="left:0px;top:410px;width:432px;height:1px;background:#f0f0f0;"></div><div style="left:0px;top:433px;width:432px;height:1px;background:#f0f0f0;"></div><div style="left:0px;top:456px;width:432px;height:1px;background:#f0f0f0;"></div><div style="left:0px;top:479px;width:432px;height:1px;background:#f0f0f0;"></div><div style="left:0px;top:502px;width:432px;height:1px;background:#f0f0f0;"></div><div style="left:0px;top:525px;width:432px;height:1px;background:#f0f0f0;"></div></div>
<span class="t" style="top:145.00px;font-size:12.5px;line-height:14px;color:#111;left:952.30px;transform:scaleX(1.0609);">Nome</span>
<span class="t" style="top:145.00px;font-size:12.5px;line-height:14px;color:#111;left:1092.13px;transform:scaleX(0.8938);">Versio...</span>
<span class="t" style="top:145.00px;font-size:12.5px;line-height:14px;color:#111;left:1149.41px;transform:scaleX(0.9871);">Online</span>
<span class="t" style="top:145.00px;font-size:12.5px;line-height:14px;color:#111;left:1202.23px;transform:scaleX(0.9329);">Percorso</span>
<div style="left:920px;top:166px;width:14px;height:14px;background:#fff;border:1px solid #7a7a7a;box-sizing:border-box;"></div>
<svg style="left:920px;top:166px" width="14" height="14" viewBox="0 0 14 14"><path d="M2.8 7.8 L6.4 11.4 L11.2 2.8" fill="none" stroke="#6a6a6a" stroke-width="1.5"/></svg>
<span class="t" style="top:166.50px;font-size:12.5px;line-height:14px;color:#111;left:952.14px;transform:scaleX(0.8781);">B4XPages</span>
<span class="t" style="top:166.50px;font-size:12.5px;line-height:14px;color:#111;left:1100.96px;transform:scaleX(0.8739);">1.12</span>
<span class="t" style="top:166.50px;font-size:12.5px;line-height:14px;color:#0808f8;left:1156.36px;transform:scaleX(0.8739);">1.12</span>
<span class="t" style="top:166.50px;font-size:12.5px;line-height:14px;color:#111;left:1202.22px;transform:scaleX(0.9729);">Internal</span>
<span class="t" style="top:166.50px;font-size:12.5px;line-height:14px;color:#111;left:1282.23px;transform:scaleX(0.9083);">B4A, B4i, B4</span>
<div style="left:920px;top:189px;width:14px;height:14px;background:#fff;border:1px solid #7a7a7a;box-sizing:border-box;"></div>
<svg style="left:920px;top:189px" width="14" height="14" viewBox="0 0 14 14"><path d="M2.8 7.8 L6.4 11.4 L11.2 2.8" fill="none" stroke="#6a6a6a" stroke-width="1.5"/></svg>
<span class="t" style="top:189.50px;font-size:12.5px;line-height:14px;color:#111;left:952.13px;transform:scaleX(0.9053);">BCToast</span>
<span class="t" style="top:189.50px;font-size:12.5px;line-height:14px;color:#111;left:1100.96px;transform:scaleX(0.8739);">1.01</span>
<span class="t" style="top:189.50px;font-size:12.5px;line-height:14px;color:#0808f8;left:1156.36px;transform:scaleX(0.8739);">1.01</span>
<span class="t" style="top:189.50px;font-size:12.5px;line-height:14px;color:#111;left:1202.22px;transform:scaleX(0.9729);">Internal</span>
<span class="t" style="top:189.50px;font-size:12.5px;line-height:14px;color:#111;left:1282.23px;transform:scaleX(0.9083);">B4A, B4i, B4</span>
<div style="left:920px;top:212px;width:14px;height:14px;background:#fff;border:1px solid #7a7a7a;box-sizing:border-box;"></div>
<svg style="left:920px;top:212px" width="14" height="14" viewBox="0 0 14 14"><path d="M2.8 7.8 L6.4 11.4 L11.2 2.8" fill="none" stroke="#6a6a6a" stroke-width="1.5"/></svg>
<span class="t" style="top:212.50px;font-size:12.5px;line-height:14px;color:#111;left:952.12px;transform:scaleX(0.9598);">iCore</span>
<span class="t" style="top:212.50px;font-size:12.5px;line-height:14px;color:#111;left:1100.96px;transform:scaleX(0.8739);">8.90</span>
<span class="t" style="top:212.50px;font-size:12.5px;line-height:14px;color:#111;left:1202.22px;transform:scaleX(0.9729);">Internal</span>
<span class="t" style="top:212.50px;font-size:12.5px;line-height:14px;color:#111;left:1282.22px;transform:scaleX(0.9334);">B4i</span>
<div style="left:920px;top:235px;width:14px;height:14px;background:#fff;border:1px solid #7a7a7a;box-sizing:border-box;"></div>
<svg style="left:920px;top:235px" width="14" height="14" viewBox="0 0 14 14"><path d="M2.8 7.8 L6.4 11.4 L11.2 2.8" fill="none" stroke="#6a6a6a" stroke-width="1.5"/></svg>
<span class="t" style="top:235.50px;font-size:12.5px;line-height:14px;color:#111;left:952.12px;transform:scaleX(0.9335);">iNFC</span>
<span class="t" style="top:235.50px;font-size:12.5px;line-height:14px;color:#111;left:1100.96px;transform:scaleX(0.8739);">1.10</span>
<span class="t" style="top:235.50px;font-size:12.5px;line-height:14px;color:#0808f8;left:1156.36px;transform:scaleX(0.8739);">1.10</span>
<span class="t" style="top:235.50px;font-size:12.5px;line-height:14px;color:#111;left:1202.22px;transform:scaleX(0.9729);">Internal</span>
<span class="t" style="top:235.50px;font-size:12.5px;line-height:14px;color:#111;left:1282.22px;transform:scaleX(0.9334);">B4i</span>
<div style="left:920px;top:258px;width:14px;height:14px;background:#fff;border:1px solid #7a7a7a;box-sizing:border-box;"></div>
<svg style="left:920px;top:258px" width="14" height="14" viewBox="0 0 14 14"><path d="M2.8 7.8 L6.4 11.4 L11.2 2.8" fill="none" stroke="#6a6a6a" stroke-width="1.5"/></svg>
<span class="t" style="top:258.50px;font-size:12.5px;line-height:14px;color:#111;left:952.12px;transform:scaleX(0.9676);">iPhone</span>
<span class="t" style="top:258.50px;font-size:12.5px;line-height:14px;color:#111;left:1100.96px;transform:scaleX(0.8739);">2.01</span>
<span class="t" style="top:258.50px;font-size:12.5px;line-height:14px;color:#111;left:1202.22px;transform:scaleX(0.9729);">Internal</span>
<span class="t" style="top:258.50px;font-size:12.5px;line-height:14px;color:#111;left:1282.22px;transform:scaleX(0.9334);">B4i</span>
<div style="left:920px;top:281px;width:14px;height:14px;background:#fff;border:1px solid #7a7a7a;box-sizing:border-box;"></div>
<svg style="left:920px;top:281px" width="14" height="14" viewBox="0 0 14 14"><path d="M2.8 7.8 L6.4 11.4 L11.2 2.8" fill="none" stroke="#6a6a6a" stroke-width="1.5"/></svg>
<span class="t" style="top:281.50px;font-size:12.5px;line-height:14px;color:#111;left:952.13px;transform:scaleX(0.9313);">iRandomAccessFile</span>
<span class="t" style="top:281.50px;font-size:12.5px;line-height:14px;color:#111;left:1100.96px;transform:scaleX(0.8739);">1.72</span>
<span class="t" style="top:281.50px;font-size:12.5px;line-height:14px;color:#0808f8;left:1156.36px;transform:scaleX(0.8739);">1.72</span>
<span class="t" style="top:281.50px;font-size:12.5px;line-height:14px;color:#111;left:1202.22px;transform:scaleX(0.9729);">Internal</span>
<span class="t" style="top:281.50px;font-size:12.5px;line-height:14px;color:#111;left:1282.22px;transform:scaleX(0.9334);">B4i</span>
<div style="left:920px;top:304px;width:14px;height:14px;background:#fff;border:1px solid #7a7a7a;box-sizing:border-box;"></div>
<svg style="left:920px;top:304px" width="14" height="14" viewBox="0 0 14 14"><path d="M2.8 7.8 L6.4 11.4 L11.2 2.8" fill="none" stroke="#6a6a6a" stroke-width="1.5"/></svg>
<span class="t" style="top:304.50px;font-size:12.5px;line-height:14px;color:#111;left:952.13px;transform:scaleX(0.8921);">iXUI</span>
<span class="t" style="top:304.50px;font-size:12.5px;line-height:14px;color:#111;left:1100.96px;transform:scaleX(0.8739);">2.31</span>
<span class="t" style="top:304.50px;font-size:12.5px;line-height:14px;color:#0808f8;left:1156.36px;transform:scaleX(0.8739);">2.30</span>
<span class="t" style="top:304.50px;font-size:12.5px;line-height:14px;color:#111;left:1202.22px;transform:scaleX(0.9729);">Internal</span>
<span class="t" style="top:304.50px;font-size:12.5px;line-height:14px;color:#111;left:1282.22px;transform:scaleX(0.9334);">B4i</span>
<div style="left:920px;top:327px;width:14px;height:14px;background:#fff;border:1px solid #7a7a7a;box-sizing:border-box;"></div>
<svg style="left:920px;top:327px" width="14" height="14" viewBox="0 0 14 14"><path d="M2.8 7.8 L6.4 11.4 L11.2 2.8" fill="none" stroke="#6a6a6a" stroke-width="1.5"/></svg>
<span class="t" style="top:327.50px;font-size:12.5px;line-height:14px;color:#111;left:952.13px;transform:scaleX(0.9066);">XUI Views</span>
<span class="t" style="top:327.50px;font-size:12.5px;line-height:14px;color:#111;left:1100.96px;transform:scaleX(0.8739);">2.66</span>
<span class="t" style="top:327.50px;font-size:12.5px;line-height:14px;color:#0808f8;left:1156.36px;transform:scaleX(0.8739);">2.66</span>
<span class="t" style="top:327.50px;font-size:12.5px;line-height:14px;color:#111;left:1202.22px;transform:scaleX(0.9729);">Internal</span>
<span class="t" style="top:327.50px;font-size:12.5px;line-height:14px;color:#111;left:1282.23px;transform:scaleX(0.9083);">B4A, B4i, B4</span>
<div style="left:920px;top:350px;width:14px;height:14px;background:#fff;border:1px solid #7a7a7a;box-sizing:border-box;"></div>
<span class="t" style="top:350.50px;font-size:12.5px;line-height:14px;color:#111;left:952.12px;transform:scaleX(0.9423);">B4XCollections</span>
<span class="t" style="top:350.50px;font-size:12.5px;line-height:14px;color:#0808f8;left:1156.36px;transform:scaleX(0.8739);">1.13</span>
<span class="t" style="top:350.50px;font-size:12.5px;line-height:14px;color:#111;left:1202.22px;transform:scaleX(0.9729);">Internal</span>
<div style="left:920px;top:373px;width:14px;height:14px;background:#fff;border:1px solid #7a7a7a;box-sizing:border-box;"></div>
<span class="t" style="top:373.50px;font-size:12.5px;line-height:14px;color:#111;left:952.13px;transform:scaleX(0.9085);">B4XDrawer</span>
<span class="t" style="top:373.50px;font-size:12.5px;line-height:14px;color:#0808f8;left:1156.36px;transform:scaleX(0.8739);">1.55</span>
<span class="t" style="top:373.50px;font-size:12.5px;line-height:14px;color:#111;left:1202.22px;transform:scaleX(0.9729);">Internal</span>
<div style="left:920px;top:396px;width:14px;height:14px;background:#fff;border:1px solid #7a7a7a;box-sizing:border-box;"></div>
<span class="t" style="top:396.50px;font-size:12.5px;line-height:14px;color:#111;left:952.12px;transform:scaleX(0.9365);">B4XFormatter</span>
<span class="t" style="top:396.50px;font-size:12.5px;line-height:14px;color:#0808f8;left:1156.36px;transform:scaleX(0.8739);">1.04</span>
<span class="t" style="top:396.50px;font-size:12.5px;line-height:14px;color:#111;left:1202.22px;transform:scaleX(0.9729);">Internal</span>
<div style="left:920px;top:419px;width:14px;height:14px;background:#fff;border:1px solid #7a7a7a;box-sizing:border-box;"></div>
<span class="t" style="top:419.50px;font-size:12.5px;line-height:14px;color:#111;left:952.13px;transform:scaleX(0.9093);">B4XPreferencesDialo</span>
<span class="t" style="top:419.50px;font-size:12.5px;line-height:14px;color:#0808f8;left:1156.36px;transform:scaleX(0.8739);">1.75</span>
<span class="t" style="top:419.50px;font-size:12.5px;line-height:14px;color:#111;left:1202.22px;transform:scaleX(0.9729);">Internal</span>
<div style="left:920px;top:442px;width:14px;height:14px;background:#fff;border:1px solid #7a7a7a;box-sizing:border-box;"></div>
<span class="t" style="top:442.50px;font-size:12.5px;line-height:14px;color:#111;left:952.13px;transform:scaleX(0.8965);">B4XTable</span>
<span class="t" style="top:442.50px;font-size:12.5px;line-height:14px;color:#0808f8;left:1156.36px;transform:scaleX(0.8739);">1.24</span>
<span class="t" style="top:442.50px;font-size:12.5px;line-height:14px;color:#111;left:1202.22px;transform:scaleX(0.9729);">Internal</span>
<div style="left:920px;top:465px;width:14px;height:14px;background:#fff;border:1px solid #7a7a7a;box-sizing:border-box;"></div>
<span class="t" style="top:465.50px;font-size:12.5px;line-height:14px;color:#111;left:952.13px;transform:scaleX(0.9283);">B4XTurtle</span>
<span class="t" style="top:465.50px;font-size:12.5px;line-height:14px;color:#0808f8;left:1156.36px;transform:scaleX(0.8739);">1.06</span>
<span class="t" style="top:465.50px;font-size:12.5px;line-height:14px;color:#111;left:1202.22px;transform:scaleX(0.9729);">Internal</span>
<div style="left:920px;top:488px;width:14px;height:14px;background:#fff;border:1px solid #7a7a7a;box-sizing:border-box;"></div>
<span class="t" style="top:488.50px;font-size:12.5px;line-height:14px;color:#111;left:952.13px;transform:scaleX(0.9199);">BCTextEngine</span>
<span class="t" style="top:488.50px;font-size:12.5px;line-height:14px;color:#0808f8;left:1156.36px;transform:scaleX(0.8739);">1.96</span>
<span class="t" style="top:488.50px;font-size:12.5px;line-height:14px;color:#111;left:1202.22px;transform:scaleX(0.9729);">Internal</span>
<div style="left:920px;top:511px;width:14px;height:14px;background:#fff;border:1px solid #7a7a7a;box-sizing:border-box;"></div>
<span class="t" style="top:511.50px;font-size:12.5px;line-height:14px;color:#111;left:952.12px;transform:scaleX(0.9399);">DesignerUtils</span>
<span class="t" style="top:511.50px;font-size:12.5px;line-height:14px;color:#0808f8;left:1156.36px;transform:scaleX(0.8739);">1.04</span>
<span class="t" style="top:511.50px;font-size:12.5px;line-height:14px;color:#111;left:1202.22px;transform:scaleX(0.9729);">Internal</span>
<div style="left:920px;top:534px;width:14px;height:14px;background:#fff;border:1px solid #7a7a7a;box-sizing:border-box;"></div>
<span class="t" style="top:534.50px;font-size:12.5px;line-height:14px;color:#111;left:952.11px;transform:scaleX(1.0275);">iAd</span>
<span class="t" style="top:534.50px;font-size:12.5px;line-height:14px;color:#111;left:1202.22px;transform:scaleX(0.9729);">Internal</span>
<div style="left:920px;top:557px;width:14px;height:14px;background:#fff;border:1px solid #7a7a7a;box-sizing:border-box;"></div>
<span class="t" style="top:557.50px;font-size:12.5px;line-height:14px;color:#111;left:952.11px;transform:scaleX(1.0209);">iAdMob</span>
<span class="t" style="top:557.50px;font-size:12.5px;line-height:14px;color:#0808f8;left:1156.36px;transform:scaleX(0.8739);">4.10</span>
<span class="t" style="top:557.50px;font-size:12.5px;line-height:14px;color:#111;left:1202.22px;transform:scaleX(0.9729);">Internal</span>
<div style="left:920px;top:580px;width:14px;height:14px;background:#fff;border:1px solid #7a7a7a;box-sizing:border-box;"></div>
<span class="t" style="top:580.50px;font-size:12.5px;line-height:14px;color:#111;left:952.12px;transform:scaleX(0.9769);">iAnalytics</span>
<span class="t" style="top:580.50px;font-size:12.5px;line-height:14px;color:#111;left:1202.22px;transform:scaleX(0.9729);">Internal</span>
<div style="left:920px;top:603px;width:14px;height:14px;background:#fff;border:1px solid #7a7a7a;box-sizing:border-box;"></div>
<span class="t" style="top:603.50px;font-size:12.5px;line-height:14px;color:#111;left:952.12px;transform:scaleX(0.9805);">iArchiver</span>
<span class="t" style="top:603.50px;font-size:12.5px;line-height:14px;color:#0808f8;left:1156.36px;transform:scaleX(0.8739);">1.30</span>
<span class="t" style="top:603.50px;font-size:12.5px;line-height:14px;color:#111;left:1202.22px;transform:scaleX(0.9729);">Internal</span>
<div style="left:920px;top:626px;width:14px;height:14px;background:#fff;border:1px solid #7a7a7a;box-sizing:border-box;"></div>
<span class="t" style="top:626.50px;font-size:12.5px;line-height:14px;color:#111;left:952.12px;transform:scaleX(0.9500);">iBarcode</span>
<span class="t" style="top:626.50px;font-size:12.5px;line-height:14px;color:#0808f8;left:1156.36px;transform:scaleX(0.8739);">1.22</span>
<span class="t" style="top:626.50px;font-size:12.5px;line-height:14px;color:#111;left:1202.22px;transform:scaleX(0.9729);">Internal</span>
<div style="left:920px;top:649px;width:14px;height:14px;background:#fff;border:1px solid #7a7a7a;box-sizing:border-box;"></div>
<span class="t" style="top:649.50px;font-size:12.5px;line-height:14px;color:#111;left:952.12px;transform:scaleX(0.9700);">iBitmapCreator</span>
<span class="t" style="top:649.50px;font-size:12.5px;line-height:14px;color:#0808f8;left:1156.36px;transform:scaleX(0.8739);">4.73</span>
<span class="t" style="top:649.50px;font-size:12.5px;line-height:14px;color:#111;left:1202.22px;transform:scaleX(0.9729);">Internal</span>
<span class="t" style="top:145.00px;font-size:12.5px;line-height:14px;color:#111;left:1282.22px;transform:scaleX(0.9836);">Piattaforme</span>
<div style="left:1341px;top:142px;width:17px;height:520px;background:#f4f4f4;"></div>
<div style="left:910px;top:661px;width:448px;height:17px;background:#f4f4f4;"></div>
<div style="left:1342px;top:142px;width:15px;height:16px;background:#fff;border:1px solid #bdbdbd;box-sizing:border-box;"></div>
<svg style="left:1346px;top:148px" width="7" height="4" viewBox="0 0 7 4"><path d="M0 3.8 H7 L3.5 0 Z" fill="#bdbdbd"/></svg>
<div style="left:1342px;top:159px;width:15px;height:141px;background:#fff;border:1px solid #a9a9a9;box-sizing:border-box;"></div>
<div style="left:1342px;top:645px;width:15px;height:16px;background:#fff;border:1px solid #bdbdbd;box-sizing:border-box;"></div>
<svg style="left:1346px;top:651px" width="7" height="4" viewBox="0 0 7 4"><path d="M0 0 H7 L3.5 3.8 Z" fill="#9a9a9a"/></svg>
<div style="left:910px;top:662px;width:16px;height:15px;background:#fff;border:1px solid #bdbdbd;box-sizing:border-box;"></div>
<svg style="left:916px;top:666px" width="4" height="7" viewBox="0 0 4 7"><path d="M3.8 0 V7 L0 3.5 Z" fill="#9a9a9a"/></svg>
<div style="left:927px;top:662px;width:287px;height:15px;background:#fff;border:1px solid #a9a9a9;box-sizing:border-box;"></div>
<div style="left:1325px;top:662px;width:16px;height:15px;background:#fff;border:1px solid #bdbdbd;box-sizing:border-box;"></div>
<svg style="left:1331px;top:666px" width="4" height="7" viewBox="0 0 4 7"><path d="M0 0 V7 L3.8 3.5 Z" fill="#9a9a9a"/></svg>
<div style="left:1342px;top:661px;width:16px;height:17px;background:#f4f4f4;"></div>
<svg style="left:917px;top:684px" width="11" height="10" viewBox="0 0 11 10"><rect x="0" y="0" width="4.4" height="3.8" fill="#3a3a3a"/><rect x="5.8" y="0" width="4.5" height="3.8" fill="#3a3a3a"/><rect x="0" y="5.6" width="10.3" height="4.3" fill="#3a3a3a"/></svg>
<span class="t" style="top:682.00px;font-size:12.5px;line-height:14px;color:#1e1e1e;left:935.81px;transform:scaleX(0.9925);">Modu...</span>
<div style="left:983px;top:679px;width:79px;height:21px;background:#fff;border:1px solid #d8d8d8;box-sizing:border-box;border-top:none;"></div>
<svg style="left:990px;top:683px" width="14" height="11" viewBox="0 0 14 11"><path d="M0.6 0.6 H5.4 Q6.8 0.6 6.8 2 V10 Q6.8 9 5.4 9 H0.6 Z M13 0.6 H8.2 Q6.8 0.6 6.8 2 V10 Q6.8 9 8.2 9 H13 Z" fill="none" stroke="#2b2b2b" stroke-width="1.2"/></svg>
<span class="t" style="top:682.00px;font-size:12.5px;line-height:14px;color:#1b6fd1;left:1009.82px;transform:scaleX(0.9606);">Librari...</span>
<svg style="left:1069px;top:682px" width="15" height="12" viewBox="0 0 15 12"><path d="M0 2 H5 L6.5 0.5 H13 V11.5 H0 Z" fill="#dcb67a"/><path d="M13 2 H14.5 V11.5 H13 Z" fill="#c9a063"/></svg>
<span class="t" style="top:682.00px;font-size:12.5px;line-height:14px;color:#1e1e1e;left:1089.33px;transform:scaleX(0.8930);">Files...</span>
<svg style="left:1146px;top:682px" width="14" height="13" viewBox="0 0 14 13"><path d="M0 1.4 H14 M0 5 H10.4 M0 8.6 H12 M0 12.2 H7" stroke="#3a3a3a" stroke-width="1.9"/></svg>
<span class="t" style="top:682.00px;font-size:12.5px;line-height:14px;color:#1e1e1e;left:1166.82px;transform:scaleX(0.9360);">Logs</span>
<svg style="left:1204px;top:682px" width="14" height="13" viewBox="0 0 14 13"><circle cx="8.4" cy="4.8" r="3.6" fill="none" stroke="#2b2b2b" stroke-width="1.9"/><path d="M5.6 7.6 L1.2 11.8" stroke="#2b2b2b" stroke-width="2.2" stroke-linecap="round"/></svg>
<span class="t" style="top:682.00px;font-size:12.5px;line-height:14px;color:#1e1e1e;left:1223.83px;transform:scaleX(0.9134);">Ricerc...</span>
<svg style="left:1282px;top:683px" width="13" height="12" viewBox="0 0 13 12"><rect x="2" y="0" width="4.4" height="3.6" fill="#2b2b2b"/><rect x="8" y="0" width="4.4" height="5" fill="#2b2b2b"/><circle cx="4.6" cy="7.2" r="2.2" fill="none" stroke="#2a5db0" stroke-width="1.1"/><path d="M3 8.8 L0.6 11.4" stroke="#2a5db0" stroke-width="1.3"/></svg>
<span class="t" style="top:682.00px;font-size:12.5px;line-height:14px;color:#1e1e1e;left:1301.33px;transform:scaleX(0.9144);">Cerca t...</span>
<div style="left:0px;top:706px;width:1366px;height:22px;background:#007acc;"></div>
<div style="left:0px;top:728px;width:1366px;height:40px;background:linear-gradient(90deg,#22343d 0%,#21323b 60%,#1c2a40 76%,#19243f 100%);"></div>
<svg style="left:16px;top:740px" width="16" height="16" viewBox="0 0 16 16"><path d="M0 2.3 L6.6 1.4 V7.6 H0 Z M7.6 1.25 L16 0 V7.6 H7.6 Z M0 8.5 H6.6 V14.7 L0 13.8 Z M7.6 8.5 H16 V16 L7.6 14.85 Z" fill="#fff"/></svg>
<div style="left:48px;top:728px;width:288px;height:40px;background:#f2f2f2;border:1px solid #cacaca;box-sizing:border-box;border-top:none;border-left:none;"></div>
<svg style="left:59px;top:739px" width="18" height="18" viewBox="0 0 18 18"><circle cx="11.4" cy="6.4" r="5.1" fill="none" stroke="#1a1a1a" stroke-width="1.3"/><path d="M7.4 10.4 L1 16.6" stroke="#1a1a1a" stroke-width="1.3"/></svg>
<span class="t" style="top:740.00px;font-size:15px;line-height:17px;color:#1e1e1e;left:88.29px;transform:scaleX(0.9409);">Cerca</span>
<svg style="left:352px;top:740px" width="17" height="16" viewBox="0 0 17 16"><rect x="1.1" y="4.9" width="9.4" height="6.6" fill="none" stroke="#fff" stroke-width="1.1"/><path d="M0.6 2.6 V0.6 H11.2 V2.6 M0.6 13 V15 H11.2 V13" fill="none" stroke="#fff" stroke-width="1.1"/><path d="M14.5 0 V15.4" stroke="#fff" stroke-width="1.3"/><rect x="13" y="4" width="3.1" height="3.2" fill="#fff"/></svg>
<svg style="left:398px;top:735px" width="26" height="26" viewBox="0 0 26 26"><defs><linearGradient id="eg0" x1="0.2" y1="0" x2="0.6" y2="1"><stop offset="0" stop-color="#2fa8e6"/><stop offset="1" stop-color="#0c4fa0"/></linearGradient><linearGradient id="eg1" x1="0" y1="0.4" x2="1" y2="0.5"><stop offset="0" stop-color="#2db3f0"/><stop offset="0.55" stop-color="#35c98c"/><stop offset="1" stop-color="#63df55"/></linearGradient></defs><circle cx="13" cy="13" r="12.3" fill="url(#eg0)"/><path d="M1 11 Q3 0.7 13 0.7 Q24.6 0.7 25.3 11.5 Q25.2 17.2 19.6 17.6 Q15.4 17.4 14.8 14.6 Q16.6 13.4 16 11 Q15 8 11 8 Q5.4 8 2.4 13.4 Q1 14 1 11 Z" fill="url(#eg1)"/><path d="M9.4 12.6 Q12 9.4 14.4 11.4 Q15.6 13.4 13.6 15 Q12 17.6 15 19.6 Q18.6 21.6 22.4 19.4 Q19 24.6 13 24.6 Q7.6 22 7.6 16.4 Q7.8 14 9.4 12.6 Z" fill="#0d4a96"/><circle cx="7" cy="19.4" r="5.6" fill="#c39a7a"/><path d="M1.8 17.8 Q3 13.4 7 13.6 Q11.4 13.6 12.2 17.8 Q9.6 15.8 7 16.4 Q4.2 15.8 1.8 17.8 Z" fill="#3d2e26"/><path d="M3 23.2 Q7 21.2 11 23.2 Q9.2 25 7 25 Q4.8 25 3 23.2 Z" fill="#e8e4e0"/></svg>
<svg style="left:447px;top:735px" width="28" height="27" viewBox="0 0 28 27"><defs><linearGradient id="tb0" x1="0.8" y1="0" x2="0.2" y2="1"><stop offset="0" stop-color="#3a93f5"/><stop offset="1" stop-color="#1451c4"/></linearGradient></defs><path d="M4.6 5.4 Q0.6 10 1.6 15.6 Q3 22.6 10 24.6 Q18 26 22.6 20.6 Q26.6 15 24 8 Q23.6 4 25 1.8 Q22.4 2.2 21 3.4 Q17.4 0.8 12.6 1.6 Q15.6 2.6 16.6 4.6 Q10.6 3 6.4 8.4 Q4.8 7.4 4.6 5.4 Z" fill="url(#tb0)"/><path d="M4.6 5.4 Q0.6 10 1.6 15.6 Q2.6 21 7 23.4 Q3.4 18 5.4 12 Q6.6 9 6.4 8.4 Q4.8 7.4 4.6 5.4 Z" fill="#0e3fa6"/><ellipse cx="12.6" cy="13.4" rx="6.2" ry="5.4" fill="#eef2fa"/><path d="M7 11.4 Q12.6 5.6 18.4 11 Q12.8 9.4 7 11.4 Z" fill="#bccdea"/><circle cx="19.2" cy="19.4" r="7" fill="#f2003c"/><path d="M17.2 17.6 L19.8 15.8 V23.2 M17.6 23.2 H22" fill="none" stroke="#fff" stroke-width="1.6"/></svg>
<div style="left:440px;top:766px;width:40px;height:2px;background:#5f8fd4;"></div>
<div style="left:497px;top:736px;width:24px;height:24px;background:#fff;"></div>
<svg style="left:497px;top:736px" width="24" height="24" viewBox="0 0 24 24"><path d="M1.5 21 Q3 10 11 6.5 Q17 4 22.5 0.8 Q23 5 19.5 8 Q21.5 8.6 20 10.4 Q15 10.5 11 13.5 Q7.5 17 5 22.5 Z" fill="#bf7c5c" opacity="0.9"/><path d="M4.5 16 Q9 8.5 18 4.5" fill="none" stroke="#dcae97" stroke-width="2.2"/><path d="M13.6 15.6 L15.4 20.6 L17 17 L18.6 20.6 L20.6 15.6" fill="none" stroke="#111" stroke-width="1.8"/></svg>
<div style="left:546px;top:748px;width:11px;height:12px;background:#ff0000;"></div>
<svg style="left:548px;top:736px" width="22" height="22" viewBox="0 0 22 22"><rect x="2" y="1.5" width="7" height="5.5" fill="#25d02a" stroke="#111" stroke-width="1"/><path d="M1 8.5 H10 M2 10.2 H9" stroke="#ddd" stroke-width="1.3"/><rect x="11.5" y="8.5" width="8.5" height="7" fill="#0a18e8" stroke="#111" stroke-width="1.2"/><path d="M10 17.5 H21 M9 19.5 H21" stroke="#e6e6e6" stroke-width="1.5"/></svg>
<svg style="left:594.9px;top:735.9px" width="24.1" height="24.1" viewBox="0 0 24 24"><circle cx="12" cy="12" r="11.6" fill="#fff"/><path d="M12 12 L1.95 6.2 A11.6 11.6 0 0 1 22.05 6.2 Z" fill="#ea4335"/><path d="M12 12 L22.05 6.2 A11.6 11.6 0 0 1 12 23.6 Z" fill="#fbbc05"/><path d="M12 12 L12 23.6 A11.6 11.6 0 0 1 1.95 6.2 Z" fill="#34a853"/><path d="M12 6.8 H21.7 A11.6 11.6 0 0 0 2.3 6.2 L7 9.5 Z" fill="#ea4335"/><circle cx="12" cy="12" r="5.4" fill="#fff"/><circle cx="12" cy="12" r="4.2" fill="#4285f4"/></svg>
<svg style="left:645px;top:736px" width="22" height="24" viewBox="0 0 22 24"><path d="M11 0.5 L21 5.5 V17.5 L11 23.5 L1 17.5 V5.5 Z" fill="#cfcfcf"/><path d="M11 0.5 L21 5.5 L11 11 L1 5.5 Z" fill="#e9e9e9"/><path d="M11 11 V23.5 L1 17.5 V5.5 Z" fill="#b9b9b9"/><path d="M7.5 4 L11 2.4 L14.5 4 L11 5.8 Z" fill="#6b6b6b"/><path d="M3.6 11 L7.6 13.2 V17.4 L3.6 15.2 Z" fill="#5a5a5a"/><path d="M14.4 13.2 L18.4 11 V15.2 L14.4 17.4 Z" fill="#6b6b6b"/><path d="M4.3 7.2 L11 10.8 L17.7 7.2 M11 10.8 V23" fill="none" stroke="#f6f6f6" stroke-width="0.8"/></svg>
<svg style="left:693px;top:735px" width="24" height="26" viewBox="0 0 24 26"><path d="M1 1.5 H14 L18.5 6 V24.5 H1 Z" fill="#f4f4f4" stroke="#c9c9c9" stroke-width="1"/><path d="M2 9 H17.5 V23.5 H2 Z" fill="#7bd13a"/><path d="M2 16 H17.5 V23.5 H2 Z" fill="#5cb82a"/><path d="M5.5 7 V18" stroke="#222" stroke-width="1.8"/><path d="M8 11.5 H13" stroke="#222" stroke-width="1.2" stroke-dasharray="1.6 1"/><path d="M21.6 1.4 L23.4 3.2 L14.6 19 L12.8 19.6 L13 17.6 Z" fill="#e8a317" stroke="#a86a00" stroke-width="0.6"/><path d="M21.6 1.4 L23.4 3.2 L22.6 4.6 L20.8 2.8 Z" fill="#d23a3a"/></svg>
<svg style="left:743px;top:739px" width="22" height="18" viewBox="0 0 22 18"><path d="M0 1.5 Q0 0.5 1 0.5 H8 L10 2.5 H21 Q22 2.5 22 3.5 V17 H0 Z" fill="#e9a825"/><path d="M0 4.5 H22 V17 H0 Z" fill="#fcd462"/><path d="M4.5 17 V10.5 H17.5 V17 H14 V13.4 H8 V17 Z" fill="#3f93dd"/></svg>
<svg style="left:791px;top:742px" width="24" height="17" viewBox="0 0 24 17"><path d="M1 10 L8 1.5 H22.5 L16 10 Z" fill="#f3f3f3" stroke="#111" stroke-width="1"/><path d="M7 8 L11.6 2.6 H18 L13.6 8 Z" fill="#b5b52a"/><path d="M10.5 6 L13 3 H16 L13.6 6 Z" fill="#6b6b18"/><path d="M1 10 H16 V16 H1 Z" fill="#9a9a9a" stroke="#111" stroke-width="1"/><path d="M16 10 L22.5 1.5 V8 L16 16 Z" fill="#d6d6d6" stroke="#111" stroke-width="1"/></svg>
<svg style="left:840.3px;top:735.9px" width="24.1" height="24.1" viewBox="0 0 24 24"><circle cx="12" cy="12" r="11.6" fill="#fff"/><path d="M12 12 L1.95 6.2 A11.6 11.6 0 0 1 22.05 6.2 Z" fill="#ea4335"/><path d="M12 12 L22.05 6.2 A11.6 11.6 0 0 1 12 23.6 Z" fill="#fbbc05"/><path d="M12 12 L12 23.6 A11.6 11.6 0 0 1 1.95 6.2 Z" fill="#34a853"/><path d="M12 6.8 H21.7 A11.6 11.6 0 0 0 2.3 6.2 L7 9.5 Z" fill="#ea4335"/><circle cx="12" cy="12" r="5.4" fill="#fff"/><circle cx="12" cy="12" r="4.2" fill="#4285f4"/></svg>
<svg style="left:850px;top:746px" width="16" height="16" viewBox="0 0 16 16"><circle cx="8" cy="8" r="7.6" fill="#5a3b34"/><path d="M6 4.6 V11.4 M6 4.6 H10.4 M6 7.8 H9.6" fill="none" stroke="#fff" stroke-width="1.3"/></svg>
<div style="left:832px;top:766px;width:40px;height:2px;background:#5f8fd4;"></div>
<div style="left:877px;top:728px;width:48px;height:40px;background:#4e5d68;"></div>
<div style="left:877px;top:766px;width:48px;height:2px;background:#5f8fd4;"></div>
<div style="left:889px;top:736px;width:24px;height:24px;background:#fff;"></div>
<span class="t" style="top:742.00px;font-size:12px;line-height:14px;color:#aab4bd;left:893.33px;transform:scaleX(0.9410);">B4i</span>
<svg style="left:980px;top:737px" width="25" height="22" viewBox="0 0 25 22"><circle cx="11" cy="11" r="9.4" fill="#0f93dc" stroke="#fff" stroke-width="2.1"/><path d="M7.6 8.4 Q7.8 5 11 5 Q14.4 5 14.4 8 Q14.4 10 12.4 11 Q11 11.8 11 13.6" fill="none" stroke="#fff" stroke-width="2.3"/><circle cx="11" cy="16.8" r="1.5" fill="#fff"/><circle cx="19.6" cy="15.8" r="4.8" fill="#f5b400"/><path d="M19.6 13.4 V18.4" stroke="#fff" stroke-width="1.6"/></svg>
<svg style="left:1031px;top:735px" width="24" height="24" viewBox="0 0 24 24"><defs><linearGradient id="wg" x1="0.2" y1="0" x2="0.8" y2="1"><stop offset="0" stop-color="#ffc400"/><stop offset="1" stop-color="#f06a00"/></linearGradient></defs><circle cx="11" cy="13" r="10" fill="url(#wg)"/><circle cx="17" cy="6.8" r="5.9" fill="#c9281e"/></svg>
<span class="t" style="top:737.00px;font-size:9px;line-height:10px;color:#fff;font-weight:700;left:1045.85px;transform:scaleX(1.1145);">6</span>
<span class="t" style="top:739.00px;font-size:15px;line-height:17px;color:#fff;left:1062.80px;transform:scaleX(0.8996);">24°C</span>
<svg style="left:1116px;top:743px" width="14" height="9" viewBox="0 0 14 9"><path d="M0.8 8 L6.8 1.4 L12.8 8" fill="none" stroke="#fff" stroke-width="1.4"/></svg>
<svg style="left:1141px;top:740px" width="13" height="16" viewBox="0 0 13 16"><rect x="1" y="4.2" width="7.6" height="7.6" rx="1.6" fill="none" stroke="#fff" stroke-width="1.1"/><path d="M8.6 7 L11.8 5 V11 L8.6 9" fill="none" stroke="#fff" stroke-width="1.1"/><path d="M2 2.4 Q5 -0.4 8 2.4 M2 13.6 Q5 16.4 8 13.6" fill="none" stroke="#fff" stroke-width="1.1"/></svg>
<svg style="left:1162px;top:742px" width="18" height="12" viewBox="0 0 18 12"><rect x="5.6" y="3.2" width="10.6" height="7.4" fill="none" stroke="#fff" stroke-width="1.1"/><rect x="16.6" y="5.2" width="1.2" height="3.4" fill="#fff"/><rect x="7" y="4.6" width="7.8" height="4.6" fill="#fff"/><path d="M1.4 0 V2.4 M3.8 0 V2.4 M0.4 2.6 H4.8 V4.4 Q4.8 6.2 2.6 6.2 Q0.4 6.2 0.4 4.4 Z M2.6 6.2 V8.6 Q2.6 10.6 5.4 10.4" fill="none" stroke="#fff" stroke-width="1.1"/></svg>
<svg style="left:1190px;top:743px" width="14" height="13" viewBox="0 0 14 13"><path d="M1 12 Q1.4 2 12.4 1" fill="none" stroke="#9aa3ad" stroke-width="1.2"/><path d="M4.6 12 Q5 5.6 12.4 5" fill="none" stroke="#c9ced4" stroke-width="1.2"/><path d="M8 12 Q8.4 9 12.4 8.6" fill="none" stroke="#e6e9ec" stroke-width="1.2"/><circle cx="11.2" cy="11.2" r="1.5" fill="#fff"/></svg>
<span class="t" style="top:741.00px;font-size:12.5px;line-height:14px;color:#fff;left:1217.13px;transform:scaleX(0.9106);">ITA</span>
<span class="t" style="top:731.70px;font-size:12.5px;line-height:14px;color:#fff;left:1263.83px;transform:scaleX(0.8911);">09:21</span>
<span class="t" style="top:750.00px;font-size:12.5px;line-height:14px;color:#fff;left:1249.83px;transform:scaleX(0.9331);">14/07/2025</span>
<svg style="left:1324px;top:740px" width="18" height="15" viewBox="0 0 18 15"><path d="M0.5 0.5 H16.5 V11.5 H5.6 L2.8 14.4 V11.5 H0.5 Z" fill="#fff"/><path d="M3 3.4 H14 M3 5.8 H14 M3 8.2 H10" stroke="#1b2840" stroke-width="1"/></svg>
<svg style="left:1332px;top:747px" width="17" height="17" viewBox="0 0 17 17"><circle cx="8.5" cy="8.5" r="7.8" fill="#2b2f36" stroke="#8a8f96" stroke-width="1"/><path d="M6.6 6.2 L9 4.6 V12.4" fill="none" stroke="#fff" stroke-width="1.5"/></svg>
<div style="left:1361px;top:728px;width:1px;height:40px;background:#6b7480;"></div>
<div style="left:0px;top:768px;width:1366px;height:98px;background:#ffffff;"></div>
</body></html>
